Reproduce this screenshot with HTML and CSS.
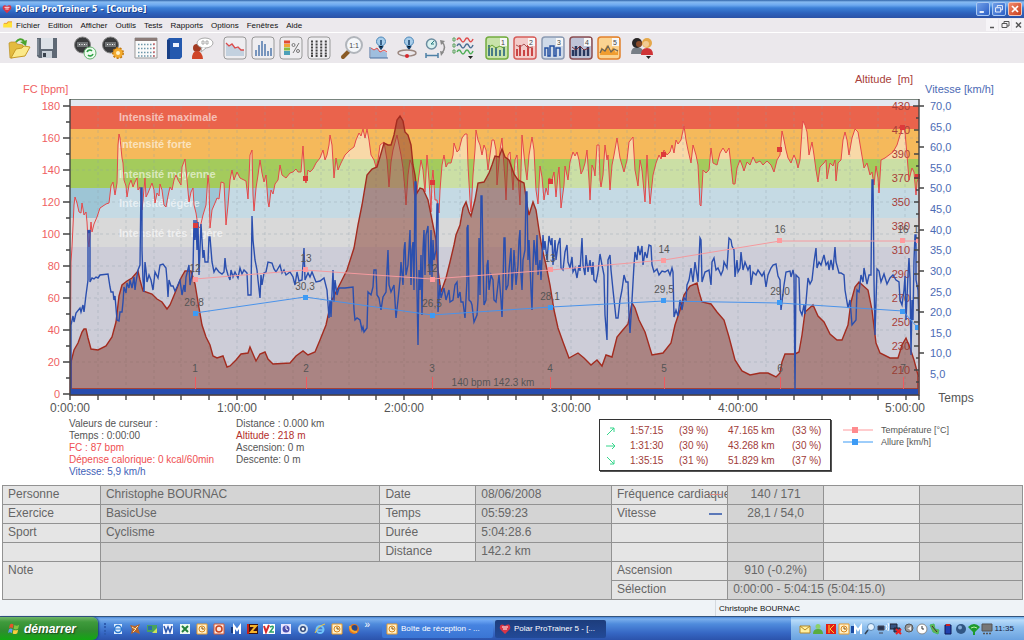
FILE: index.html
```html
<!DOCTYPE html>
<html lang="fr">
<head>
    <meta charset="UTF-8">
    <title>Polar ProTrainer 5 - [Courbe]</title>
    <link rel="stylesheet" href="styles.css">
</head>
<body>
    <header class="titlebar">
        <svg class="heart" viewBox="0 0 12 12"><path d="M6 11L1 6Q0 2 3 1.500Q5 1.500 6 3Q7 1 10 1.500Q12 3 11 6Z" fill="#d93546"/><path d="M3 4h6M4 6h4" stroke="#fff"/></svg>
        <h1>Polar ProTrainer 5 - [Courbe]</h1>
        <div class="win-buttons">
            <button aria-label="Réduire"><svg viewBox="0 0 14 14"><path d="M3 10.500h5" stroke="#fff" stroke-width="2"/></svg></button>
            <button aria-label="Restaurer"><svg viewBox="0 0 14 14"><path d="M5 5V3h6v5H9M3 5.500h6v5H3z" fill="none" stroke="#fff"/></svg></button>
            <button class="close" aria-label="Fermer"><svg viewBox="0 0 14 14"><path d="M3.500 3.500l7 7m0-7l-7 7" stroke="#fff" stroke-width="2"/></svg></button>
        </div>
    </header>

    <nav class="menubar">
        <svg class="folder" viewBox="0 0 12 10"><path d="M0 3h4l1-2h6v7H0z" fill="#ffe23a"/><path d="M1 3h4l1-2h5" fill="none" stroke="#e98b2d"/></svg>
        <a href="#">Fichier</a><a href="#">Edition</a><a href="#">Afficher</a><a href="#">Outils</a><a href="#">Tests</a><a href="#">Rapports</a><a href="#">Options</a><a href="#">Fenêtres</a><a href="#">Aide</a>
        <div class="mdi-buttons">
            <button aria-label="Réduire la courbe"><svg viewBox="0 0 12 12"><path d="M4 8.500h4" stroke="#555" stroke-width="1.500"/></svg></button>
            <button aria-label="Restaurer la courbe"><svg viewBox="0 0 12 12"><path d="M5 4V2.500h5V7H8M3 4.500h5v4H3z" fill="none" stroke="#555"/></svg></button>
            <button aria-label="Fermer la courbe"><svg viewBox="0 0 12 12"><path d="M4 3.500l5 5m0-5l-5 5" stroke="#555" stroke-width="1.500"/></svg></button>
        </div>
    </nav>

    <div class="toolbar">
        <div class="group first">
            <button aria-label="Ouvrir"><svg viewBox="0 0 24 24"><path d="M2 7l2-1 5 0 1 2 6 1v5L5 22H3z" fill="#e3bb3f" stroke="#b98f22" stroke-width=".7"/><path d="M4 22L9 13l6-1 2-2 6 1-5 9z" fill="#fbe98a" stroke="#c79a26"/><path d="M9 6Q13 1 17 5" fill="none" stroke="#4aa32e" stroke-width="2"/><path d="M13 6l7-2-1 6z" fill="#4aa32e"/></svg></button>
            <button aria-label="Enregistrer"><svg viewBox="0 0 24 24"><path d="M2 2h20v20H4l-2-2z" fill="#5e6874"/><path d="M6 2h12v11H6z" fill="#dde2e8"/><path d="M7 15h10v7H7z" fill="#c9d0d8"/><path d="M8 17h3v4H8z" fill="#39424d"/><path d="M3 3v16" stroke="#9ba6b2"/></svg></button>
        </div>
        <div class="group">
            <button aria-label="Transférer"><svg viewBox="0 0 24 24"><circle cx="9.500" cy="9" r="8" fill="#3a3b3d" stroke="#888"/><path d="M4 6h11v5H4z" fill="#727577"/><path d="M6 8.500h8" stroke="#fff" stroke-dasharray="1 1.500"/><circle cx="17" cy="17" r="6" fill="#eefbee" stroke="#63b26d"/><path d="M14 16a3 3 0 0 1 5-1m1 3a3 3 0 0 1-5 1" fill="none" stroke="#2ea246" stroke-width="1.600"/></svg></button>
            <button aria-label="Réglages du moniteur"><svg viewBox="0 0 24 24"><circle cx="9.500" cy="9" r="8" fill="#3a3b3d" stroke="#888"/><path d="M4 6h11v5H4z" fill="#727577"/><path d="M6 8.500h8" stroke="#fff" stroke-dasharray="1 1.500"/><circle cx="17" cy="17" r="5" fill="#eda227" stroke="#c67c12" stroke-width="2" stroke-dasharray="2 1.500"/><circle cx="17" cy="17" r="4.500" fill="#f3ab2f"/><circle cx="17" cy="17" r="2" fill="#fff2c9"/></svg></button>
        </div>
        <div class="group">
            <button aria-label="Calendrier"><svg viewBox="0 0 24 24"><path d="M1 2h22v20H1z" fill="#fafafa" stroke="#999"/><path d="M1 2h22v3H1z" fill="#8b7b78"/><path d="M4 8.500h17M4 12.500h17M4 16.500h17M4 20h17" stroke="#6e97aa" stroke-width="1.500" stroke-dasharray="1.500 1.500"/><path d="M20 7v14" stroke="#d44" stroke-dasharray="2 2"/></svg></button>
            <button aria-label="Journal"><svg viewBox="0 0 24 24"><path d="M5 4l2-2h13v19l-2 2H5z" fill="#2459ae"/><path d="M5 4h3v19H5z" fill="#183f86"/><path d="M11 7h6v4h-6z" fill="#eef4ff"/></svg></button>
            <button aria-label="Commentaires"><svg viewBox="0 0 24 24"><circle cx="7" cy="12" r="4" fill="#a33a22"/><path d="M2 23q0-8 5-8t6 8z" fill="#cf4528"/><ellipse cx="15" cy="7" rx="8" ry="5" fill="#fff" stroke="#aaa"/><path d="M12 11l-1 5 5-4" fill="#fff" stroke="#aaa"/><path d="M12 5h2v3h-2zM16 5h2v3h-2z" fill="none" stroke="#aaa"/></svg></button>
        </div>
        <div class="group">
            <button aria-label="Courbe"><svg viewBox="0 0 24 24"><rect x="1" y="1" width="22" height="22" rx="3" fill="#eeedf0" stroke="#999"/><path d="M3 7l3 3 3-2 3 4 3-1 3 3 3 0v6H3z" fill="#c3d1df"/><path d="M3 7l3 3 3-2 3 4 3-1 3 3h3" fill="none" stroke="#dc4b4b" stroke-width="1.300"/></svg></button>
            <button aria-label="Distribution"><svg viewBox="0 0 24 24"><rect x="1" y="1" width="22" height="22" rx="3" fill="#eeedf0" stroke="#999"/><path d="M5 20v-6m3 6V9m3 11V5m3 15V8m3 12v-5m3 5v-8" stroke="#7795bd" stroke-width="2"/></svg></button>
            <button aria-label="Pourcentages"><svg viewBox="0 0 24 24"><rect x="1" y="1" width="22" height="22" rx="3" fill="#eeedf0" stroke="#999"/><path d="M5 6h6" stroke="#e14b33" stroke-width="3"/><path d="M5 9.500h6" stroke="#f1a436" stroke-width="3"/><path d="M5 13h6" stroke="#8cbd3d" stroke-width="3"/><path d="M5 17h6" stroke="#4ba0b8" stroke-width="4"/><path d="M20 7l-6 10" stroke="#777"/><circle cx="14.500" cy="9" r="1.500" fill="none" stroke="#777"/><circle cx="19" cy="15" r="1.500" fill="none" stroke="#777"/></svg></button>
            <button aria-label="Liste"><svg viewBox="0 0 24 24"><rect x="1" y="1" width="22" height="22" rx="3" fill="#eeedf0" stroke="#999"/><path d="M4 5.500h16M4 8.500h16M4 11.500h16M4 14.500h16M4 17.500h16M4 20h16" stroke="#444" stroke-width="2" stroke-dasharray="2 2.600"/></svg></button>
        </div>
        <div class="group">
            <button aria-label="Zoom 1:1"><svg viewBox="0 0 24 24"><path d="M3 21l6-6" stroke="#8a5a25" stroke-width="4" stroke-linecap="round"/><circle cx="14" cy="9" r="8" fill="#f5f7fa" stroke="#b1b5bb" stroke-width="2"/><text x="14" y="12" class="icon-text">1:1</text></svg></button>
            <button aria-label="Informations de courbe"><svg viewBox="0 0 24 24"><circle cx="13" cy="5.500" r="4.500" fill="#a8cdea" stroke="#4b87b8"/><path d="M13 4v5m-2 1l2 3 2-3" stroke="#16436f" stroke-width="1.500"/><path d="M3 12l3 2 3-2 3 4 4-1 3 2v5H3z" fill="#9fbede"/><path d="M3 12l3 2 3-2 3 4 4-2 3 2" stroke="#e24c4c" fill="none"/><path d="M2 11v11h18" stroke="#486ea0" fill="none"/></svg></button>
            <button aria-label="Informations de tour"><svg viewBox="0 0 24 24"><circle cx="13" cy="5.500" r="4.500" fill="#a8cdea" stroke="#4b87b8"/><path d="M13 4v5m-2 1l2 3 2-3" stroke="#16436f" stroke-width="1.500"/><ellipse cx="11" cy="17" rx="9" ry="3" fill="none" stroke="#9b877f" stroke-width="1.500"/><circle cx="11" cy="20" r="2" fill="#d8282f"/></svg></button>
            <button aria-label="Temps ou distance"><svg viewBox="0 0 24 24"><circle cx="7.500" cy="8" r="5" fill="#d9f1ef" stroke="#6c8da0" stroke-width="1.500"/><path d="M7 8l3-3M7 8h3" stroke="#287d83"/><path d="M2 19.500h12M2 17v5m12-5v5" stroke="#4d80a6" stroke-width="1.500"/><path d="M18 6q5 5 0 11" fill="none" stroke="#888" stroke-width="1.500"/><path d="M16 4l5 1-4 4zM16 15l1 5 3-4z" fill="#888"/></svg></button>
            <button aria-label="Choix des courbes"><svg viewBox="0 0 24 24"><path d="M1 2h2v3H1zM1 8h2v3H1zM1 14h2v3H1z" fill="none" stroke="#58a05b"/><path d="M5 4q2-4 4 0t4 0 4 0 4-1" fill="none" stroke="#df4d4d" stroke-width="1.500"/><path d="M5 10q2-4 4 0t4 0 4 0 4-1" fill="none" stroke="#4c7093" stroke-width="1.500"/><path d="M5 16q2-4 4 0t4 0 4 0 4-1" fill="none" stroke="#4fae58" stroke-width="1.500"/><path d="M16 20h5l-2.500 3z" fill="#222"/></svg></button>
        </div>
        <div class="group">
            <button aria-label="Vue 1"><svg viewBox="0 0 24 24"><rect x="1" y="1" width="22" height="22" rx="3" fill="#c8e3aa" stroke="#73ac3f" stroke-width="1.500"/><path d="M4 20V9m3 11v-8m4 8v-9m4 9v-6m4 6v-9" stroke="#477b87" stroke-width="2"/><path d="M3 12l4-3 4 3 4-2 5 3" stroke="#68a332" fill="none"/><path d="M15 2h7v8h-7z" fill="#f7f7f7"/><text x="18" y="9" class="icon-text">1</text></svg></button>
            <button aria-label="Vue 2"><svg viewBox="0 0 24 24"><rect x="1" y="1" width="22" height="22" rx="3" fill="#f3ccca" stroke="#d65d5a" stroke-width="1.500"/><path d="M4 20v-7m3 7V9m4 11v-6m4 6V9m4 11v-8" stroke="#ca4545" stroke-width="2"/><path d="M3 9l4 2 4-3 4 4 5-1" stroke="#a55" fill="none"/><path d="M15 2h7v8h-7z" fill="#f7f7f7"/><text x="18" y="9" class="icon-text">2</text></svg></button>
            <button aria-label="Vue 3"><svg viewBox="0 0 24 24"><rect x="1" y="1" width="22" height="22" rx="3" fill="#cfdae8" stroke="#8c9bb2" stroke-width="1.500"/><path d="M4 20v-8h3v8h2V10h4v10h2v-8h4v8" stroke="#2450a0" stroke-width="1.500" fill="none"/><path d="M15 2h7v8h-7z" fill="#f7f7f7"/><text x="18" y="9" class="icon-text">3</text></svg></button>
            <button aria-label="Vue 4"><svg viewBox="0 0 24 24"><rect x="1" y="1" width="22" height="22" rx="3" fill="#bfc3d7" stroke="#8b4d51" stroke-width="1.500"/><path d="M4 20v-6m3 6V10m4 10v-9m4 9v-6m4 6v-9" stroke="#28385f" stroke-width="2.500"/><path d="M3 11l4 3 4-4 4 4 5-2" stroke="#7b2f35" fill="none"/><path d="M15 2h7v8h-7z" fill="#f7f7f7"/><text x="18" y="9" class="icon-text">4</text></svg></button>
            <button aria-label="Vue 5"><svg viewBox="0 0 24 24"><rect x="1" y="1" width="22" height="22" rx="3" fill="#fbd391" stroke="#e2802b" stroke-width="1.500"/><path d="M3 19l1-8 3 4 3-6 3 7 3-5 3 6 2-4v6z" fill="#f09d30"/><path d="M3 17l2-4 3 2 3-5 3 6 3-3 4 2" stroke="#6c6557" stroke-width="1.300" fill="none"/><path d="M15 2h7v8h-7z" fill="#f7f7f7"/><text x="18" y="9" class="icon-text">5</text></svg></button>
        </div>
        <div class="group">
            <button aria-label="Personnes"><svg viewBox="0 0 24 24"><path d="M1 18q0-7 6-7t7 7z" fill="#777e86"/><circle cx="7" cy="7" r="5" fill="#292525"/><circle cx="9" cy="8" r="3" fill="#8b4b2a"/><path d="M11 19q0-7 6-7t6 7z" fill="#cf3437"/><circle cx="17" cy="7" r="5" fill="#e5a84b"/><circle cx="16" cy="8" r="3" fill="#f2cb93"/><path d="M16 20h5l-2.500 3z" fill="#222"/></svg></button>
        </div>
    </div>

    <main>
        <svg class="chart" viewBox="0 64 1024 352" role="img" aria-label="Courbe de l'exercice">
            <defs>
                <clipPath id="underHr">
                    <path id="hrArea" d="M70,395 L71,262 72,247 74,205 75,197 77,203 79,212 81,213 82,203 84,215 86,212 87,222 88,240 89,247 91,222 92,232 94,224 97,217 100,208 103,206 106,204 109,203 111,186 113,182 115,195 117,183 118,145 119,134 120,138 122,158 123,163 124,180 126,186 127,197 129,185 131,180 133,187 135,182 137,178 138,190 140,187 142,210 143,200 145,178 146,197 148,193 150,188 152,183 154,190 155,203 157,193 159,196 160,184 162,190 164,205 166,207 168,196 170,187 172,190 174,180 176,175 178,180 181,185 182,167 185,159 187,180 189,202 191,192 193,188 194,205 196,213 198,226 200,228 203,215 206,205 208,175 209,185 210,228 212,210 215,203 217,198 219,199 221,182 224,183 226,225 228,205 230,180 232,170 234,180 237,172 240,178 244,180 246,181 248,199 250,155 252,150 253,195 254,211 256,188 258,175 260,160 262,173 264,182 266,175 268,202 269,207 271,190 273,194 275,184 278,180 280,165 282,175 286,178 290,173 293,172 296,169 298,172 301,172 303,146 305,180 306,183 308,170 310,172 313,169 316,163 320,158 323,150 325,160 327,155 329,145 330,135 332,145 334,178 336,158 338,170 341,163 345,155 350,150 354,147 356,140 359,133 361,136 363,129 365,138 367,129 369,140 371,155 374,160 376,167 378,160 380,145 384,142 387,160 389,187 391,162 393,150 397,135 399,145 401,155 403,168 405,190 406,205 408,175 410,160 412,165 414,190 415,200 417,190 419,175 421,160 423,170 425,192 427,155 429,180 431,212 432,180 433,170 435,200 437,200 439,213 440,190 442,165 444,155 446,167 448,163 451,163 453,155 454,143 457,152 459,150 462,138 465,134 467,134 468,165 470,200 471,212 473,175 475,150 476,130 478,140 480,145 482,155 484,145 486,150 488,170 490,155 492,140 494,140 496,150 497,185 499,162 500,150 502,138 505,180 506,200 508,155 510,152 513,190 515,160 517,155 519,190 520,205 522,135 525,165 527,180 529,155 532,137 534,150 536,190 538,204 540,166 542,177 544,200 546,188 548,195 549,178 552,180 554,172 556,197 558,175 559,167 561,208 564,185 565,166 568,180 570,162 573,152 575,156 577,152 579,160 581,174 583,170 585,163 587,150 589,180 590,200 592,165 594,170 595,176 597,145 599,145 600,180 601,187 603,175 605,145 607,160 608,155 610,190 612,165 614,155 617,138 620,158 624,172 627,160 629,142 633,137 635,170 638,186 640,160 642,170 645,202 647,155 648,175 650,204 653,175 656,163 659,155 661,159 664,150 667,155 670,152 672,145 674,153 676,140 678,144 681,140 684,126 686,140 688,150 691,163 693,145 696,155 698,165 700,205 701,206 703,170 706,173 709,170 711,148 713,163 715,164 717,165 720,153 723,148 726,153 729,148 731,165 733,184 735,184 737,168 740,160 742,165 744,171 747,162 750,165 753,157 756,163 760,161 763,165 767,161 771,165 774,172 777,160 780,155 782,131 784,140 786,150 788,158 791,163 794,155 796,160 798,168 800,160 802,130 803,121 805,125 807,132 809,155 812,142 814,155 816,170 818,182 820,167 824,163 826,160 827,179 830,163 833,166 835,160 836,181 838,163 841,160 843,140 845,132 847,140 849,155 852,138 855,129 858,132 861,150 864,168 867,163 870,175 872,172 874,185 876,166 878,178 879,193 881,160 885,158 889,155 893,152 897,145 900,135 903,127 905,132 907,155 909,180 912,168 914,172 916,195 917,182 919,177 V395Z"/>
                </clipPath>
            </defs>

            <!-- Heart rate zones -->
            <rect x="70" y="99" width="849" height="7" fill="#e3e7ef"/>
            <rect x="70" y="106" width="849" height="23" fill="#ea634c"/>
            <rect x="70" y="129" width="849" height="30" fill="#f5b95b"/>
            <rect x="70" y="159" width="849" height="29" fill="#a4cb5c"/>
            <rect x="70" y="188" width="849" height="30" fill="#9dc5d5"/>
            <rect x="70" y="218" width="849" height="29" fill="#d9d9d9"/>
            <rect x="70" y="247" width="849" height="148" fill="#cdcdd8"/>
            <g clip-path="url(#underHr)">
                <rect x="70" y="106" width="849" height="53" fill="#f8d9a8"/>
                <rect x="70" y="159" width="849" height="29" fill="#cbdfa5"/>
                <rect x="70" y="188" width="849" height="30" fill="#c5dae4"/>
            </g>
            <path class="grid" d="M98,106V389M126,106V389M154,106V389M181,106V389M209,106V389M237,106V389M265,106V389M293,106V389M321,106V389M349,106V389M376,106V389M404,106V389M432,106V389M460,106V389M488,106V389M516,106V389M543,106V389M571,106V389M599,106V389M627,106V389M655,106V389M683,106V389M710,106V389M738,106V389M766,106V389M794,106V389M822,106V389M850,106V389M878,106V389M905,106V389M70,138H919M70,170H919M70,202H919M70,234H919M70,266H919M70,298H919M70,330H919M70,362H919"/>
            <g class="zones">
                <text x="119" y="121">Intensité maximale</text>
                <text x="119" y="148">Intensité forte</text>
                <text x="119" y="178">Intensité moyenne</text>
                <text x="119" y="207">Intensité légère</text>
                <text x="119" y="237">Intensité très légère</text>
            </g>
            <g class="alt-labels">
                <text x="910" y="110">430</text><text x="910" y="134">410</text><text x="910" y="158">390</text><text x="910" y="182">370</text><text x="910" y="206">350</text><text x="910" y="230">330</text><text x="910" y="254">310</text><text x="910" y="278">290</text><text x="910" y="302">270</text><text x="910" y="326">250</text><text x="910" y="350">230</text><text x="910" y="374">210</text>
            </g>

            <!-- Curves -->
            <use href="#hrArea" class="hr"/>
            <path class="altitude" d="M71,389 V362 L74,350 78,343 82,332 84,329 86,329 88,338 91,349 98,350 106,346 112,337 116,322 119,296 122,285 127,281 132,278 138,271 140,280 143,291 152,294 157,299 162,302 167,309 170,305 175,293 181,278 185,271 191,271 195,284 198,302 202,325 206,337 210,345 213,356 217,358 223,356 227,367 230,366 236,360 241,354 248,353 250,347 253,354 256,361 260,354 265,352 268,359 273,364 290,363 296,356 303,351 308,355 315,352 320,340 326,325 331,302 337,290 347,270 354,248 358,225 362,205 367,175 372,169 377,167 380,157 384,143 388,145 391,145 394,135 397,120 400,116 403,121 405,132 408,135 411,145 413,165 415,175 417,193 420,188 423,189 428,200 430,210 433,225 436,240 438,270 441,292 446,278 450,262 454,245 456,235 460,225 463,208 466,202 469,212 471,216 475,200 478,183 484,182 489,173 492,165 495,156 499,157 502,149 505,157 509,160 514,174 518,180 524,183 527,205 529,215 533,202 536,210 539,230 542,248 546,265 550,285 554,310 558,328 563,342 569,358 578,353 584,358 591,365 597,360 602,366 606,355 612,357 617,337 622,331 628,324 632,303 635,308 639,320 645,332 652,355 663,353 671,343 675,325 680,310 684,295 690,286 697,283 699,292 702,302 711,304 717,312 724,320 729,337 735,360 742,371 750,375 760,373 768,373 776,377 780,373 782,362 785,354 795,354 799,352 802,335 805,312 813,305 818,316 824,322 830,334 837,340 842,340 848,325 851,302 855,287 859,282 868,290 872,310 876,343 880,353 890,358 898,358 902,345 906,338 910,348 914,360 918,375 V389Z"/>
            <path class="speed" d="M71,390 V325 L73,316 74,322 76,313 80,308 81,312 83,305 84,312 86,295 88,280 88,230 89,232 90,230 90,282 92,278 94,279 96,277 98,278 100,275 108,274 110,287 111,292 113,292 114,300 115,296 117,320 119,321 120,312 122,312 123,302 124,287 126,293 127,283 129,288 130,280 132,288 134,277 135,290 136,282 138,270 140,265 141,188 142,188 142,250 143,280 144,292 145,262 146,270 147,282 149,275 151,280 153,290 155,272 158,278 160,265 163,264 166,268 167,280 168,297 169,280 171,286 173,286 175,291 177,287 180,280 182,295 184,285 185,292 186,277 189,265 190,285 192,275 193,270 194,220 195,240 196,220 197,250 198,222 199,275 201,224 202,240 203,258 204,250 205,262 208,262 209,237 210,237 212,262 214,272 216,268 219,272 222,274 224,272 225,258 226,268 228,275 230,280 231,270 233,277 235,272 238,278 240,268 242,274 244,270 247,273 248,295 251,295 252,216 253,240 255,260 257,270 258,280 260,298 261,275 262,285 264,273 266,272 268,262 272,263 274,269 276,272 280,265 282,273 284,270 286,275 290,272 293,277 295,285 297,272 299,281 302,280 304,248 305,280 308,273 310,277 312,272 316,282 320,281 324,278 327,290 329,318 330,300 331,317 333,270 334,302 335,280 337,295 339,288 345,288 353,287 354,310 355,320 357,318 360,320 362,330 363,327 364,332 367,328 368,292 371,295 373,287 374,270 376,270 377,295 379,298 381,310 383,297 386,292 387,270 388,250 389,285 391,292 394,285 396,318 398,300 400,280 401,262 403,285 404,250 405,242 406,275 408,265 409,248 410,230 411,285 412,250 413,242 414,290 415,182 416,182 416,246 417,290 418,345 419,270 420,290 421,255 422,315 423,250 424,230 425,275 426,235 428,226 429,265 430,275 431,230 432,278 433,240 434,260 436,250 437,204 438,204 438,312 440,285 441,298 444,288 446,300 449,290 450,302 453,300 455,285 457,282 458,298 460,292 461,302 463,302 465,318 467,280 467,228 468,225 469,300 471,302 472,305 474,322 477,315 478,300 479,238 480,295 481,196 482,196 483,260 484,305 486,300 487,265 488,260 489,290 491,275 493,280 494,300 496,302 499,275 501,300 502,317 503,285 504,238 505,238 506,290 508,285 509,270 511,248 512,290 513,275 514,250 516,285 518,265 519,240 520,230 521,275 522,290 523,260 525,250 526,192 527,192 528,260 529,240 531,290 532,310 533,265 534,240 536,265 537,235 538,275 540,260 541,280 543,235 544,250 545,241 547,260 549,236 551,245 552,238 553,265 555,240 556,260 558,245 560,238 561,268 563,270 565,252 567,245 568,262 570,268 572,257 573,272 575,268 577,278 579,265 580,271 582,238 583,265 585,275 586,255 588,272 590,260 592,275 593,262 594,280 596,282 598,272 600,254 602,265 604,275 605,315 607,340 608,260 610,255 611,270 613,290 616,318 618,318 620,300 622,290 624,275 626,282 628,282 629,315 630,333 632,300 634,265 635,252 637,260 638,246 640,255 642,246 643,265 645,252 647,258 649,245 651,246 652,265 654,272 657,269 659,275 662,271 665,272 668,270 670,275 672,268 673,272 674,317 676,310 678,316 680,300 682,310 684,298 686,300 687,285 689,280 691,268 693,282 695,262 697,275 698,282 700,238 701,240 702,282 705,272 709,270 711,285 712,262 714,258 716,270 718,268 721,275 723,270 724,262 727,268 729,238 731,240 732,246 734,250 735,277 737,260 738,272 740,268 741,252 743,270 745,262 748,270 750,265 751,285 753,272 756,275 758,270 762,276 764,272 766,287 768,275 771,268 773,265 776,264 778,276 780,280 781,310 784,285 786,272 790,271 791,277 793,270 794,275 795,389 796,275 799,278 800,310 802,315 804,305 805,314 807,290 808,278 810,284 812,280 814,262 816,248 817,268 819,262 821,265 824,255 826,265 828,262 829,270 831,260 833,270 835,247 836,262 839,273 841,273 844,275 845,290 848,308 850,300 852,325 856,320 857,290 859,292 861,275 863,282 864,268 867,284 869,275 871,275 872,180 873,180 874,280 875,335 877,269 879,271 881,282 884,274 887,284 890,278 893,275 896,280 899,282 900,300 902,305 904,290 905,276 906,320 908,275 909,258 910,278 911,355 912,300 913,320 914,260 915,235 916,235 916,280 918,290 919,325"/>
            <path d="M70,389H918V395H70Z" fill="#274cae"/>
            <path class="temp" d="M195,279 305,270 432,279 551,270 664,260 780,241H919"/>
            <path class="pace" d="M195,313 305,297 432,315 551,307 664,301 780,303 903,311 917,327"/>
            <path d="M193,277h5v5h-5zM303,267h5v5h-5zM430,277h5v5h-5zM548,267h5v5h-5zM661,258h5v5h-5zM777,238h5v5h-5zM900,238h5v5h-5zM916,238h4v5h-4z" fill="#ff9a9d"/>
            <path d="M193,311h5v5h-5zM303,295h5v5h-5zM430,313h5v5h-5zM548,305h5v5h-5zM661,298h5v5h-5zM777,300h5v5h-5zM900,309h5v5h-5zM915,325h4v5h-4z" fill="#3d9bf5"/>
            <path d="M193,223h5v5h-5zM303,176h5v5h-5zM430,180h5v5h-5zM548,179h5v5h-5zM661,152h5v5h-5zM777,147h5v5h-5zM900,125h5v5h-5zM915,174h5v5h-5z" fill="#dd3a3a"/>
            <path class="lap" d="M195.500,377V389M306.500,377V389M432.500,377V389M550.500,377V389M664.500,377V389M780.500,377V389M903.500,377V389M918.500,377V395"/>
            <g class="marks">
                <text x="195" y="272">12</text><text x="306" y="262">13</text><text x="432" y="272">12</text><text x="550" y="262">13</text><text x="664" y="253">14</text><text x="780" y="233">16</text><text x="903" y="233">16</text><text x="916" y="233">1</text>
                <text x="194" y="306">26,8</text><text x="305" y="290">30,3</text><text x="432" y="307">26,5</text><text x="550" y="300">28,1</text><text x="664" y="293">29,5</text><text x="780" y="295">29,0</text>
                <text x="195" y="372">1</text><text x="306" y="372">2</text><text x="432" y="372">3</text><text x="550" y="372">4</text><text x="664" y="372">5</text><text x="780" y="372">6</text><text x="903" y="372">7</text>
                <text x="493" y="386">140 bpm 142.3 km</text>
            </g>

            <!-- Axes -->
            <path class="frame" d="M70,99.500H919"/>
            <path class="axis" d="M70,99V395H919V99M63,106H70M63,138H70M63,170H70M63,202H70M63,234H70M63,266H70M63,298H70M63,330H70M63,362H70M63,394H70M66,122H70M66,154H70M66,186H70M66,218H70M66,250H70M66,282H70M66,314H70M66,346H70M66,378H70"/>
            <path class="axis" d="M70,395V400M98,395V400M126,395V400M154,395V400M181,395V400M209,395V400M237,395V400M265,395V400M293,395V400M321,395V400M349,395V400M376,395V400M404,395V400M432,395V400M460,395V400M488,395V400M516,395V400M543,395V400M571,395V400M599,395V400M627,395V400M655,395V400M683,395V400M710,395V400M738,395V400M766,395V400M794,395V400M822,395V400M850,395V400M878,395V400M906,395V400M919,395V400"/>
            <path class="axis" d="M913,106H924M914,130H919M914,154H919M914,178H919M914,202H919M914,226H919M914,250H919M914,274H919M914,298H919M914,322H919M914,346H919M914,370H919M916,118H919M916,142H919M916,166H919M916,190H919M916,214H919M916,238H919M916,262H919M916,286H919M916,310H919M916,334H919M916,358H919M916,382H919M919,147H924M919,188H924M919,230H924M919,271H924M919,312H924M919,353H924"/>
            <g class="hr-labels">
                <text class="left" x="23" y="93">FC [bpm]</text>
                <text x="60" y="110">180</text><text x="60" y="142">160</text><text x="60" y="174">140</text><text x="60" y="206">120</text><text x="60" y="238">100</text><text x="60" y="270">80</text><text x="60" y="302">60</text><text x="60" y="334">40</text><text x="60" y="366">20</text><text x="60" y="398">0</text>
            </g>
            <g class="speed-labels">
                <text x="925" y="93">Vitesse [km/h]</text>
                <text x="930" y="110">70,0</text><text x="930" y="131">65,0</text><text x="930" y="151">60,0</text><text x="930" y="172">55,0</text><text x="930" y="192">50,0</text><text x="930" y="213">45,0</text><text x="930" y="234">40,0</text><text x="930" y="254">35,0</text><text x="930" y="275">30,0</text><text x="930" y="296">25,0</text><text x="930" y="316">20,0</text><text x="930" y="337">15,0</text><text x="930" y="357">10,0</text><text x="930" y="378">5,0</text>
            </g>
            <text class="alt-title" x="855" y="83">Altitude&#160; [m]</text>
            <g class="time-labels">
                <text x="70" y="412">0:00:00</text><text x="237" y="412">1:00:00</text><text x="404" y="412">2:00:00</text><text x="571" y="412">3:00:00</text><text x="738" y="412">4:00:00</text><text x="905" y="412">5:00:00</text><text x="956" y="402">Temps</text>
            </g>
        </svg>

        <section class="details">
            <div class="cursor">
                <p>Valeurs de curseur :</p>
                <p>Temps : 0:00:00</p>
                <p class="red">FC : 87 bpm</p>
                <p class="red">Dépense calorique: 0 kcal/60min</p>
                <p class="blue">Vitesse: 5,9 km/h</p>
            </div>
            <div class="cursor">
                <p>Distance : 0.000 km</p>
                <p class="brown">Altitude : 218 m</p>
                <p>Ascension: 0 m</p>
                <p>Descente: 0 m</p>
            </div>
            <table class="slopes">
                <colgroup><col class="s1"><col class="s2"><col class="s2"><col class="s3"><col></colgroup>
                <tr><td><svg viewBox="0 0 10 10"><path d="M1 9l7-7M4 2h4v4"/></svg></td><td>1:57:15</td><td>(39 %)</td><td>47.165 km</td><td>(33 %)</td></tr>
                <tr><td><svg viewBox="0 0 10 10"><path d="M0 5h9M6 2l3 3-3 3"/></svg></td><td>1:31:30</td><td>(30 %)</td><td>43.268 km</td><td>(30 %)</td></tr>
                <tr><td><svg viewBox="0 0 10 10"><path d="M1 1l7 7M4 8h4V4"/></svg></td><td>1:35:15</td><td>(31 %)</td><td>51.829 km</td><td>(37 %)</td></tr>
            </table>
            <ul class="legend">
                <li><svg viewBox="0 0 30 6"><path d="M0 3h30" stroke="#ff9a9d"/><path d="M9 0h6v6H9z" fill="#ff8b8e"/></svg>Température [°C]</li>
                <li><svg viewBox="0 0 30 6"><path d="M0 3h30" stroke="#3d9bf5"/><path d="M9 0h6v6H9z" fill="#3d9bf5"/></svg>Allure [km/h]</li>
            </ul>
        </section>

        <table class="summary">
            <colgroup><col class="c1"><col class="c2"><col class="c3"><col class="c4"><col class="c5"><col class="c6"><col class="c7"><col class="c8"></colgroup>
            <tr><th>Personne</th><td>Christophe BOURNAC</td><th>Date</th><td>08/06/2008</td><th><span class="keyed">Fréquence cardiaque<i class="key hr-key"></i></span></th><td class="center">140 / 171</td><th></th><td></td></tr>
            <tr><th>Exercice</th><td>BasicUse</td><th>Temps</th><td>05:59:23</td><th><span class="keyed">Vitesse<i class="key speed-key"></i></span></th><td class="center">28,1 / 54,0</td><th></th><td></td></tr>
            <tr><th>Sport</th><td>Cyclisme</td><th>Durée</th><td>5:04:28.6</td><th></th><td></td><th></th><td></td></tr>
            <tr><th></th><td></td><th>Distance</th><td>142.2 km</td><th></th><td></td><th></th><td></td></tr>
            <tr><th rowspan="2">Note</th><td rowspan="2" colspan="3"></td><th>Ascension</th><td class="center">910 (-0.2%)</td><th></th><td></td></tr>
            <tr><th>Sélection</th><td colspan="3">0:00:00 - 5:04:15 (5:04:15.0)</td></tr>
        </table>
    </main>

    <div class="statusbar"><span></span><span>Christophe BOURNAC</span></div>

    <footer class="taskbar">
        <button class="start">
            <svg viewBox="0 0 14 14"><path d="M2 3q2-2 4 0L5 7Q3 5 1 7z" fill="#e8532b"/><path d="M7 3q2 2 5 0l-1 4q-3 2-5 0z" fill="#84c440"/><path d="M1 8q2-2 4 0l-1 4q-2-2-4 0z" fill="#5a9df0"/><path d="M6 8q2 2 5 0l-1 4q-3 2-5 0z" fill="#f8cd3d"/></svg>
            démarrer
        </button>
        <div class="quick">
            <svg viewBox="0 0 12 12"><path d="M2 1h8v10H2z" fill="#dfeefe"/><circle cx="6" cy="6" r="3.500" fill="none" stroke="#2a78cf" stroke-width="1.500"/><path d="M3 6h6" stroke="#2a78cf"/></svg>
            <svg viewBox="0 0 12 12"><path d="M1 2l5 1 5-2-2 4 2 6-5-2-4 2 1-5z" fill="#b5642a"/><path d="M3 4l3 2 3-3M4 9l3-3" stroke="#ffe0a0" fill="none"/></svg>
            <svg viewBox="0 0 12 12"><path d="M1 2h10v7H1z" fill="#49a35c"/><path d="M2 3h4v4H2z" fill="#2b6fa8"/><path d="M6 10h5V5z" fill="#cbe25c"/></svg>
            <svg viewBox="0 0 12 12"><path d="M1 1h10v10H1z" fill="#f2f6ff"/><path d="M2 3l2 6 2-5 2 5 2-6" fill="none" stroke="#2b57ae" stroke-width="1.500"/></svg>
            <svg viewBox="0 0 12 12"><path d="M1 1h10v10H1z" fill="#ecf8ee"/><path d="M3 3l6 6m0-6L3 9" stroke="#22803c" stroke-width="2"/></svg>
            <svg viewBox="0 0 12 12"><path d="M1 1h10v10H1z" fill="#fff1cc" stroke="#e99c2d"/><circle cx="6" cy="6" r="3" fill="none" stroke="#d9871c"/><path d="M6 4v2h2" stroke="#8a5208" fill="none"/></svg>
            <svg viewBox="0 0 12 12"><path d="M1 1h10v10H1z" fill="#fbe6de" stroke="#d65a34"/><circle cx="6" cy="6" r="3" fill="none" stroke="#c9421d" stroke-width="1.500"/></svg>
            <svg viewBox="0 0 12 12"><path d="M1 4h4v6H1z" fill="#163a7d"/><path d="M4 11V3l3 4 3-4v8" stroke="#fff" stroke-width="2" fill="none"/></svg>
            <svg viewBox="0 0 12 12"><path d="M1 1h10v10H1z" fill="#3b1311"/><path d="M3 3h6L4 9h6" stroke="#f5b32a" stroke-width="2" fill="none"/><path d="M1 11V1" stroke="#c31f18" stroke-width="2"/></svg>
            <svg viewBox="0 0 12 12"><path d="M0 1h12v10H0z" fill="#fff"/><path d="M1 3l2 6 3-7" stroke="#d82b2b" stroke-width="2" fill="none"/><path d="M7 4q4-2 3 1L7 9h4" stroke="#2aa065" stroke-width="1.500" fill="none"/></svg>
            <svg viewBox="0 0 12 12"><path d="M1 1h10v10H1z" fill="#e8e6ff"/><circle cx="6" cy="6" r="3.500" fill="#4c4fae"/><path d="M6 3v3l2 1" stroke="#fff" fill="none"/></svg>
            <svg viewBox="0 0 12 12"><circle cx="6" cy="6" r="5" fill="#cfdff1"/><circle cx="6" cy="6" r="3" fill="#2d4678"/><circle cx="6" cy="6" r="1.500" fill="#fff"/></svg>
            <svg viewBox="0 0 12 12"><circle cx="6" cy="6.500" r="3.500" fill="none" stroke="#70c3fa" stroke-width="2"/><path d="M3 7h6" stroke="#70c3fa" stroke-width="1.500"/><path d="M1 10Q4 3 11 1" stroke="#f6c93c" fill="none"/></svg>
            <svg viewBox="0 0 12 12"><path d="M1 1h10v10H1z" fill="#fff1cc" stroke="#e99c2d"/><circle cx="6" cy="6" r="3" fill="none" stroke="#d9871c"/><path d="M6 4v2h2" stroke="#8a5208" fill="none"/></svg>
            <svg viewBox="0 0 12 12"><circle cx="6" cy="6" r="5" fill="#e2741c"/><circle cx="6.500" cy="5" r="3" fill="#27498b"/><path d="M2 3q0 6 7 6" stroke="#f7ac32" stroke-width="2" fill="none"/></svg>
            <span>»</span>
        </div>
        <button class="task">
            <svg viewBox="0 0 12 12"><path d="M1 1h10v10H1z" fill="#fff1cc" stroke="#e99c2d"/><circle cx="6" cy="6" r="3" fill="none" stroke="#d9871c"/><path d="M6 4v2h2" stroke="#8a5208" fill="none"/></svg>
            Boîte de réception - ...
        </button>
        <button class="task active">
            <svg viewBox="0 0 12 12"><path d="M6 11L1 6Q0 2 3 1.500Q5 1.500 6 3Q7 1 10 1.500Q12 3 11 6Z" fill="#d93546"/><path d="M3 4h6M4 6h4" stroke="#fff"/></svg>
            Polar ProTrainer 5 - [...
        </button>
        <div class="tray">
            <svg viewBox="0 0 12 12"><path d="M1 3h10v7H1z" fill="#fff0a0" stroke="#b58a28"/><path d="M1 3l5 4 5-4" fill="none" stroke="#b58a28"/></svg>
            <svg viewBox="0 0 12 12"><circle cx="6" cy="3.500" r="2.500" fill="#8bd16b"/><path d="M1 11q0-5 5-5t5 5z" fill="#59ad3e"/></svg>
            <svg viewBox="0 0 12 12"><path d="M1 1h10v10H1z" fill="#e31c16"/><path d="M4 2v8m5-8L5 6l4 4" stroke="#ffd22e" fill="none"/></svg>
            <svg viewBox="0 0 12 12"><path d="M1 1h10v10H1z" fill="#fff1cc" stroke="#e99c2d"/><circle cx="6" cy="6" r="3" fill="none" stroke="#d9871c"/><path d="M6 4v2h2" stroke="#8a5208" fill="none"/></svg>
            <svg viewBox="0 0 12 12"><path d="M0 3h5v7H0z" fill="#1c4ca3"/><path d="M4 11V3l3 4 3-4v8" stroke="#fff" stroke-width="2" fill="none"/></svg>
            <svg viewBox="0 0 12 12"><circle cx="7" cy="4" r="3.500" fill="#e5f3ff" stroke="#5b88b5"/><path d="M1 11l3-4" stroke="#345" stroke-width="1.500"/></svg>
            <svg viewBox="0 0 12 12"><path d="M1 3h6v4H1zM2 10h4" fill="#27344f" stroke="#445"/><path d="M9 2q2 2 0 5m2-7q2 4 0 8" fill="none" stroke="#fff"/></svg>
            <svg viewBox="0 0 12 12"><path d="M0 1h7v5H0zM4 5h6v4H4z" fill="#355481" stroke="#223"/><path d="M6 6l5 5m0-5l-5 5" stroke="#e22" stroke-width="2"/></svg>
            <svg viewBox="0 0 12 12"><circle cx="6" cy="5" r="4" fill="#999" stroke="#555"/><path d="M4 5h2l2-2v5L6 6" fill="#eee"/></svg>
            <svg viewBox="0 0 12 12"><circle cx="6" cy="6" r="5" fill="#fff" stroke="#888"/><path d="M6 3v3h2" stroke="#333" fill="none"/></svg>
            <svg viewBox="0 0 12 12"><path d="M1 2l4-1 1 5 4 1-1 4-5-2z" fill="#6eae4d" stroke="#4b6"/><path d="M3 3l5 6" stroke="#333"/></svg>
            <svg viewBox="0 0 12 12"><path d="M3 2h6v9H3z" fill="#2141ad" stroke="#111b55"/><path d="M4 1h4v2H4z" fill="#c22"/></svg>
            <svg viewBox="0 0 12 12"><circle cx="6" cy="6" r="5" fill="#315684"/><circle cx="5" cy="4.500" r="2" fill="#84acd8"/></svg>
            <svg viewBox="0 0 12 12"><path d="M0 4q6-6 12 0l-5 5v3H5V9z" fill="#1f9a2e"/><path d="M3 5q3-2 6 0" stroke="#b6f0a0" fill="none"/></svg>
            <svg viewBox="0 0 12 12"><path d="M1 1h10v7H1z" fill="#777" stroke="#555"/><path d="M2 10.500h8" stroke="#555" stroke-width="1.500" stroke-dasharray="2 1"/></svg>
            <time>11:35</time>
        </div>
    </footer>
</body>
</html>
```

FILE: styles.css
```css
* {
    box-sizing: border-box;
}
body {
    margin: 0;
    min-height: 100vh;
    display: flex;
    flex-direction: column;
    background: #fff;
    color: #555;
    font-family: "Liberation Sans", Arial, sans-serif;
    font-size: 11px;
}
button {
    margin: 0;
    padding: 0;
    border: 0;
    background: none;
    font-family: inherit;
}
svg {
    display: block;
}

/* Title bar and menu */
.titlebar {
    display: flex;
    align-items: center;
    height: 18px;
    padding: 0 2px;
    background: linear-gradient(#3064a8 0, #86baf1 2px, #6eaaf0 5px, #3b7fd6 8px, #2d62bd 13px, #2b51a6 18px);
}
.heart {
    width: 10px;
    height: 10px;
    margin-right: 3px;
}
.titlebar h1 {
    margin: 0;
    color: #fff;
    font-family: "DejaVu Sans Condensed", "DejaVu Sans", sans-serif;
    font-size: 9px;
    line-height: 16px;
    text-shadow: 1px 1px 0 #1c3f88;
}
.win-buttons {
    display: flex;
    gap: 2px;
    margin-left: auto;
}
.win-buttons button {
    width: 14px;
    height: 14px;
    border: 1px solid #a9c8f2;
    border-radius: 2px;
    background: linear-gradient(135deg, #6f9fe8, #2c5fc6);
}
.win-buttons .close {
    border-color: #f0c5bb;
    background: linear-gradient(135deg, #f08b6c, #c93d1c);
}
.menubar {
    display: flex;
    align-items: center;
    gap: 8px;
    height: 15px;
    padding-left: 3px;
    background: #ece9ed;
    border-bottom: 1px solid #fff;
    font-size: 8px;
}
.menubar a {
    color: #111;
    text-decoration: none;
}
.folder {
    width: 10px;
    height: 8px;
    margin-right: -5px;
}
.mdi-buttons {
    display: flex;
    gap: 1px;
    margin-left: auto;
}
.mdi-buttons button {
    width: 12px;
    height: 12px;
    background: #f6f4f7;
}

/* Toolbar */
.toolbar {
    display: flex;
    align-items: center;
    gap: 5px;
    height: 31px;
    padding-left: 5px;
    background: #ebe8ec;
    border-bottom: 1px solid #fff;
}
.group {
    display: flex;
}
.first {
    margin-right: 5px;
}
.group button {
    width: 28px;
    height: 28px;
    padding: 2px;
}
.icon-text {
    fill: #444;
    font-size: 7px;
    text-anchor: middle;
}

/* Chart */
main {
    flex: 1;
}
.chart {
    width: 100%;
    height: auto;
}
.grid {
    fill: none;
    stroke: #8c9aa5;
    stroke-opacity: 0.35;
    stroke-dasharray: 3 3;
}
.zones {
    fill: #fff;
    fill-opacity: 0.6;
    font-weight: bold;
}
.hr {
    fill: none;
    stroke: #e5484a;
}
.altitude {
    fill: #883c2e;
    fill-opacity: 0.5;
    stroke: #a32c20;
    stroke-width: 1.4;
}
.speed {
    fill: none;
    stroke: #2b4fae;
    stroke-width: 1.4;
}
.temp {
    fill: none;
    stroke: #f49a9f;
}
.pace {
    fill: none;
    stroke: #4a93ea;
}
.lap {
    stroke: #ee5a5f;
}
.marks {
    fill: #555;
    font-size: 10px;
    text-anchor: middle;
}
.frame {
    stroke: #78847d;
}
.axis {
    fill: none;
    stroke: #444;
    stroke-width: 1.4;
}
.hr-labels {
    fill: #ef5f62;
    text-anchor: end;
}
.left {
    text-anchor: start;
}
.speed-labels {
    fill: #4d6bb5;
}
.alt-title,
.alt-labels {
    fill: #a8403a;
}
.alt-labels {
    text-anchor: end;
}
.time-labels {
    fill: #555;
    font-size: 12px;
    text-anchor: middle;
}

/* Cursor values, slopes and legend */
.details {
    display: grid;
    grid-template-columns: 167fr 363fr 244fr 181fr;
    align-items: start;
    height: 69px;
    padding: 2px 0 0 69px;
    font-size: 10px;
}
.cursor p {
    margin: 0;
    line-height: 12px;
    white-space: nowrap;
}
.red {
    color: #ef4f52;
}
.blue {
    color: #3f62b8;
}
.brown {
    color: #b3302c;
}
.slopes {
    width: 232px;
    margin-top: 1px;
    padding: 3px 0 2px 6px;
    border: 1px solid #333;
    border-spacing: 0;
    table-layout: fixed;
    box-shadow: 1px 1px 0 #555;
    color: #9f3b38;
    font-size: 10px;
}
.s1 { width: 24px; }
.s2 { width: 49px; }
.s3 { width: 64px; }
.slopes td {
    height: 15px;
    padding: 0;
    white-space: nowrap;
}
.slopes svg {
    width: 10px;
    height: 10px;
    fill: none;
    stroke: #36d68c;
}
.legend {
    margin: 0;
    padding: 6px 0 0;
    list-style: none;
    font-size: 9px;
}
.legend li {
    display: flex;
    align-items: center;
    gap: 8px;
    line-height: 12px;
}
.legend svg {
    width: 30px;
    height: 6px;
}

/* Exercise summary */
.summary {
    width: calc(100% - 3px);
    margin: 0 1px 0 2px;
    border-collapse: collapse;
    table-layout: fixed;
    background: #d4d4d4;
    font-size: 12px;
}
.c1 { width: 9.6%; }
.c2 { width: 27.4%; }
.c3 { width: 9.4%; }
.c4 { width: 13.3%; }
.c5 { width: 11.4%; }
.c6 { width: 9.4%; }
.c7 { width: 9.4%; }
.c8 { width: 10.1%; }
.summary th,
.summary td {
    height: 19px;
    padding: 0 0 0 5px;
    border: 1px solid #929292;
    color: #666;
    font-weight: normal;
    line-height: 17px;
    text-align: left;
    vertical-align: top;
    white-space: nowrap;
}
.summary th {
    background: #e5e5e5;
}
.summary .center {
    padding: 0;
    text-align: center;
}
.keyed {
    display: block;
    position: relative;
    overflow: hidden;
}
.key {
    position: absolute;
    top: 8px;
    right: 5px;
    width: 13px;
    border-top: 1px solid #d98a86;
}
.speed-key {
    border-top: 2px solid #5b78b8;
}

/* Status bar and taskbar */
.statusbar {
    display: grid;
    grid-template-columns: 715fr 309fr;
    height: 16px;
    background: #eff3f7;
    color: #111;
    font-size: 8px;
    line-height: 17px;
}
.statusbar span + span {
    padding-left: 3px;
    border-left: 1px solid #d5d9de;
}
.taskbar {
    display: flex;
    align-items: center;
    height: 24px;
    border-top: 1px solid #34547c;
    background: linear-gradient(#4a86d8 0, #79aeec 2px, #4f8bdc 7px, #3667c4 16px, #2a50a8 24px);
}
.start {
    display: flex;
    align-items: center;
    gap: 3px;
    width: 98px;
    height: 23px;
    padding-left: 8px;
    border-radius: 0 6px 6px 0;
    background: linear-gradient(#6fb567 0, #3f9a3c 5px, #2f8c2e 14px, #12a812 23px);
    box-shadow: 1px 0 2px #1b3d7a;
    color: #fff;
    font-size: 12px;
    font-style: italic;
    font-weight: bold;
    text-shadow: 1px 1px 1px #1d4a1c;
}
.start svg {
    width: 13px;
    height: 13px;
}
.quick {
    display: flex;
    align-items: center;
    justify-content: space-between;
    width: 266px;
    margin-left: 6px;
    padding-left: 6px;
    border-left: 2px dotted #2e5cb0;
    color: #fff;
    font-size: 10px;
}
.quick span {
    margin-top: -8px;
}
.quick svg,
.task svg,
.tray svg {
    width: 12px;
    height: 12px;
    flex: none;
}
.task {
    display: flex;
    align-items: center;
    gap: 3px;
    width: 111px;
    height: 18px;
    margin-left: 2px;
    padding-left: 4px;
    border-radius: 2px;
    background: linear-gradient(#6fa8f5, #4683e0 5px, #3a75d4);
    color: #fff;
    font-size: 8px;
    white-space: nowrap;
}
.quick + .task {
    margin-left: 12px;
}
.active {
    background: linear-gradient(#1d3d7c, #234a98);
}
.tray {
    display: flex;
    align-items: center;
    justify-content: space-between;
    width: 233px;
    height: 23px;
    margin-left: auto;
    padding: 0 10px 0 8px;
    background: linear-gradient(#6eb0ee 0, #b9dcfa 3px, #8fc0ee 10px, #6aa2e0 23px);
    color: #17233f;
    font-size: 8px;
}
```
